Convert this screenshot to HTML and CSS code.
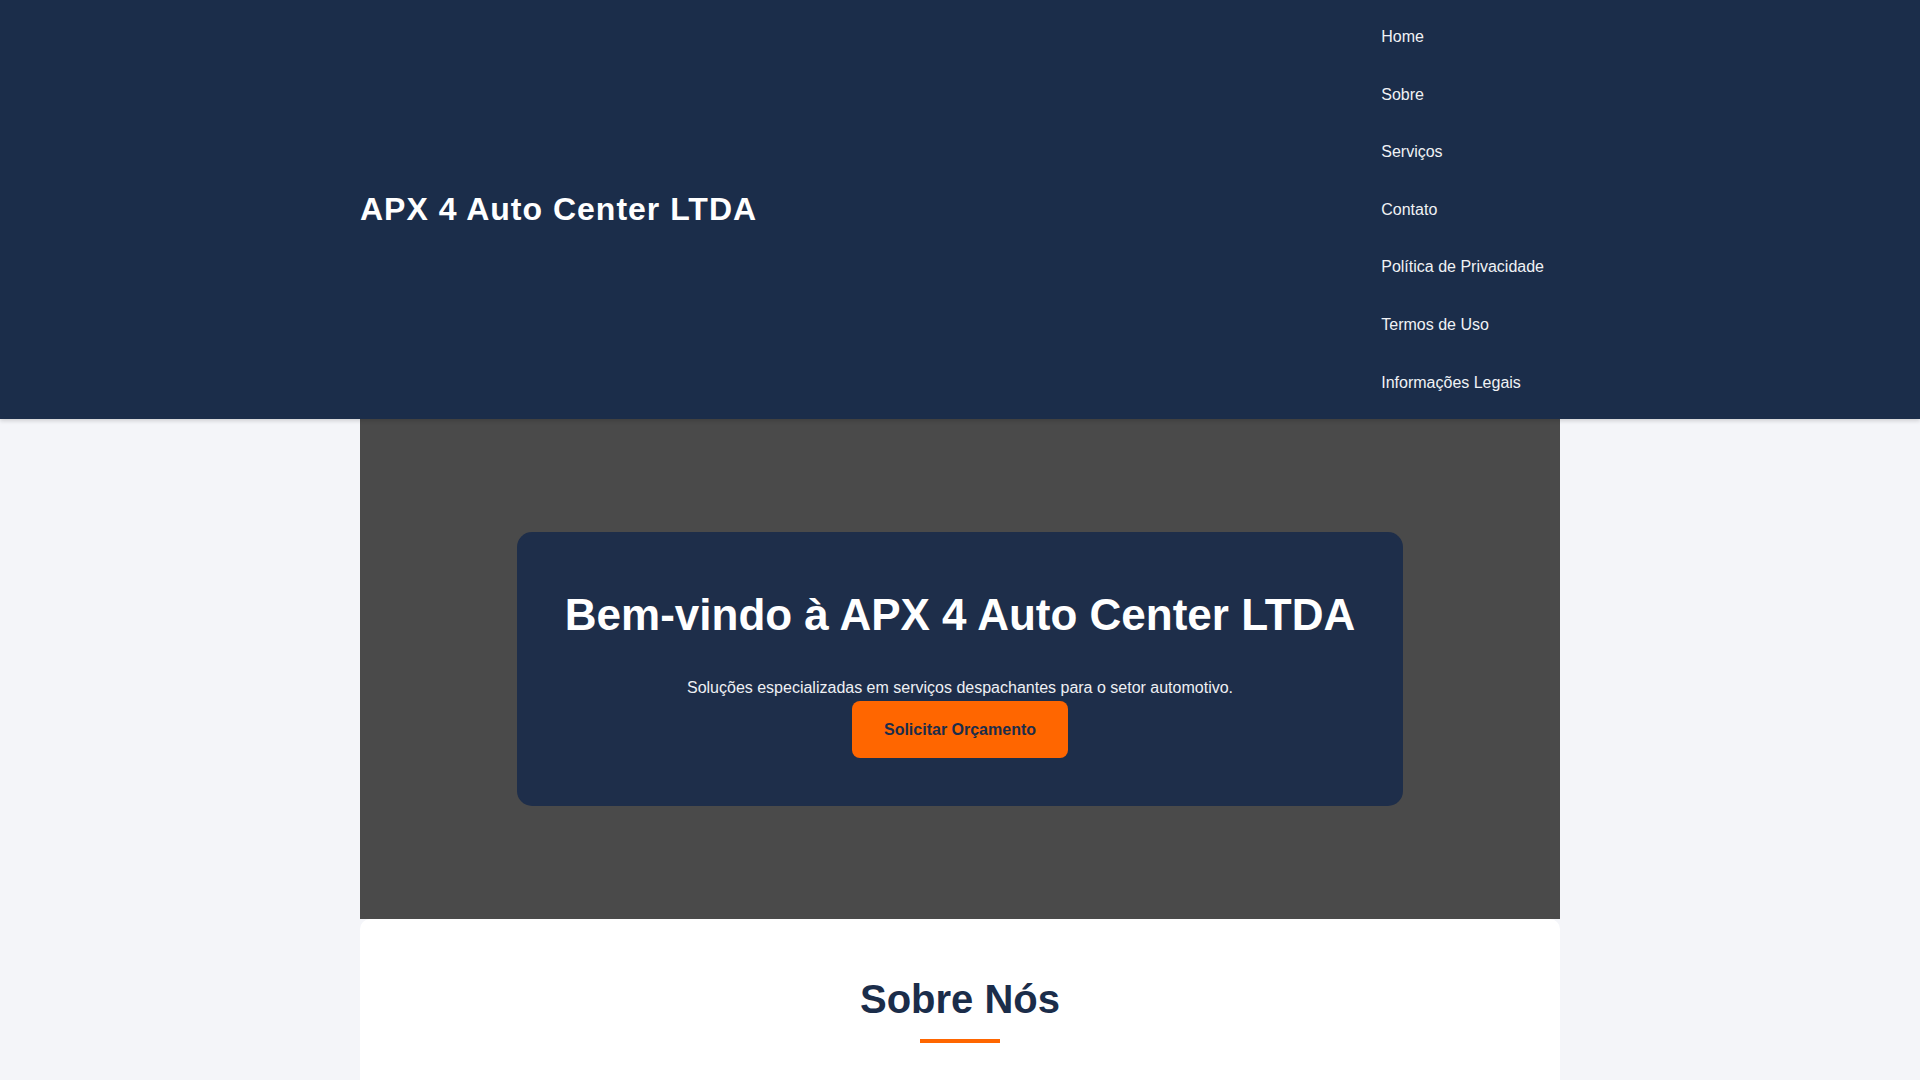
FILE: index.html
```html
<!DOCTYPE html>
<html lang="pt-BR">
<head>
    <meta charset="UTF-8">
    <meta name="viewport" content="width=device-width, initial-scale=1.0">
    <title>APX 4 Auto Center LTDA</title>
    <link rel="stylesheet" href="styles.css">
</head>
<body>
    <!-- Cabeçalho -->
    <header class="site-header">
        <div class="container header-inner">
            <div class="logo">APX 4 Auto Center LTDA</div>
            <nav>
                <ul class="nav-list">
                    <li><a href="#home">Home</a></li>
                    <li><a href="#sobre">Sobre</a></li>
                    <li><a href="#servicos">Serviços</a></li>
                    <li><a href="#contato">Contato</a></li>
                    <li><a href="#privacidade">Política de Privacidade</a></li>
                    <li><a href="#termos">Termos de Uso</a></li>
                    <li><a href="#legal">Informações Legais</a></li>
                </ul>
            </nav>
        </div>
    </header>

    <main class="container">
        <!-- Hero -->
        <section class="hero" id="home">
            <div class="hero-content">
                <h1>Bem-vindo à APX 4 Auto Center LTDA</h1>
                <p>Soluções especializadas em serviços despachantes para o setor automotivo.</p>
                <a href="#contato" class="btn">Solicitar Orçamento</a>
            </div>
        </section>

        <!-- Sobre -->
        <section class="section" id="sobre">
            <h2 class="section-title">Sobre Nós</h2>
            <p>A APX 4 Auto Center LTDA atua no setor automotivo oferecendo serviços de despachante com agilidade, transparência e segurança. Nossa equipe acompanha cada processo do início ao fim, para que você não perca tempo com burocracia.</p>
            <p>Trabalhamos com pessoas físicas, empresas e frotas, sempre com atendimento próximo e orientação clara sobre cada etapa.</p>
        </section>

        <!-- Serviços -->
        <section class="section" id="servicos">
            <h2 class="section-title">Nossos Serviços</h2>
            <div class="services">
                <div class="service-card">
                    <h3>Transferência de Veículos</h3>
                    <p>Cuidamos de toda a documentação necessária para a transferência de propriedade.</p>
                </div>
                <div class="service-card">
                    <h3>Licenciamento</h3>
                    <p>Licenciamento anual, emissão de CRLV e regularização de débitos.</p>
                </div>
                <div class="service-card">
                    <h3>Primeiro Emplacamento</h3>
                    <p>Registro de veículos novos junto ao órgão de trânsito.</p>
                </div>
                <div class="service-card">
                    <h3>Segunda Via de Documentos</h3>
                    <p>Emissão de segunda via de CRV e demais documentos do veículo.</p>
                </div>
                <div class="service-card">
                    <h3>Alteração de Características</h3>
                    <p>Regularização de alterações de cor, motor e categoria.</p>
                </div>
                <div class="service-card">
                    <h3>Consultoria</h3>
                    <p>Orientação sobre multas, recursos e pendências administrativas.</p>
                </div>
            </div>
        </section>

        <!-- Diferenciais -->
        <section class="section" id="diferenciais">
            <h2 class="section-title">Por que nos escolher</h2>
            <p>Atendimento ágil, acompanhamento de cada processo e transparência em todas as etapas.</p>
            <p>Equipe experiente e atualizada com a legislação de trânsito.</p>
        </section>

        <!-- Contato -->
        <section class="section" id="contato">
            <h2 class="section-title">Contato</h2>
            <p>Entre em contato e solicite um orçamento sem compromisso.</p>
            <p>E-mail: contato@apx4autocenter.com.br</p>
            <p>Telefone: (11) 0000-0000</p>
        </section>

        <section class="section" id="privacidade">
            <h2 class="section-title">Política de Privacidade</h2>
            <p>Os dados enviados por meio deste site são utilizados apenas para atendimento e elaboração de orçamentos, e não são compartilhados com terceiros.</p>
        </section>

        <section class="section" id="termos">
            <h2 class="section-title">Termos de Uso</h2>
            <p>Ao utilizar este site, você concorda com as condições aqui descritas. As informações apresentadas têm caráter informativo.</p>
        </section>

        <section class="section" id="legal">
            <h2 class="section-title">Informações Legais</h2>
            <p>APX 4 Auto Center LTDA. Todos os direitos reservados.</p>
        </section>
    </main>

    <footer class="site-footer">
        <p>&copy; 2024 APX 4 Auto Center LTDA</p>
    </footer>
</body>
</html>
```

FILE: styles.css
```css
body {
    font-family: 'Liberation Sans', Arial, sans-serif;
    background-color: #f4f5f9;
    color: #333;
    line-height: 1.6;
    margin: 0;
}

.container {
    max-width: 1200px;
    margin: 0 auto;
}

/* 头部 */
.site-header {
    background: #1b2d4a;
    padding: 1rem 0;
    box-shadow: 0 2px 4px rgba(0, 0, 0, 0.15);
    position: sticky;
    top: 0;
    z-index: 10;
}

.header-inner {
    display: flex;
    justify-content: space-between;
    align-items: center;
}

.logo {
    color: white;
    font-size: 2rem;
    font-weight: bold;
    letter-spacing: 1px;
}

.nav-list {
    list-style: none;
    margin: 0;
    padding: 0;
    display: flex;
    flex-direction: column;
    gap: 1rem;
}

.nav-list a {
    display: block;
    padding: 0.5rem 1rem;
    color: #f0f2f5;
    text-decoration: none;
}

/* Hero */
.hero {
    background: #4a4a4a;
    height: 500px;
    display: flex;
    justify-content: center;
    align-items: center;
}

.hero-content {
    background: #1e2e4a;
    border-radius: 15px;
    padding: 3rem;
    text-align: center;
}

.hero-content h1 {
    color: white;
    font-size: 44px;
    margin: 0 0 25px;
}

.hero-content p {
    color: #eef0f4;
    margin: 0;
}

.btn {
    display: inline-block;
    background: #ff6600;
    color: #1b2d4a;
    font-weight: bold;
    text-decoration: none;
    padding: 1rem 2rem;
    border-radius: 8px;
}

/* 内容区 */
.section {
    background: white;
    border-radius: 10px;
    padding: 3rem;
    margin-bottom: 2rem;
}

.section-title {
    color: #1b2d4a;
    font-size: 2.5rem;
    text-align: center;
    margin: 0 0 2.5rem;
}

.section-title::after {
    content: "";
    display: block;
    width: 80px;
    height: 4px;
    background: #ff6600;
    margin: 8px auto 0;
}

.section p {
    font-size: 1.1rem;
    max-width: 800px;
    margin: 0 auto 1rem;
    text-align: center;
}

.services {
    display: grid;
    grid-template-columns: repeat(3, 1fr);
    gap: 2rem;
}

.service-card {
    background: #f4f5f9;
    border-radius: 10px;
    padding: 2rem;
    min-height: 240px;
}

.service-card h3 {
    color: #1b2d4a;
    margin-top: 0;
}

.site-footer {
    background: #1b2d4a;
    color: white;
    text-align: center;
    padding: 3rem 0;
}
```
